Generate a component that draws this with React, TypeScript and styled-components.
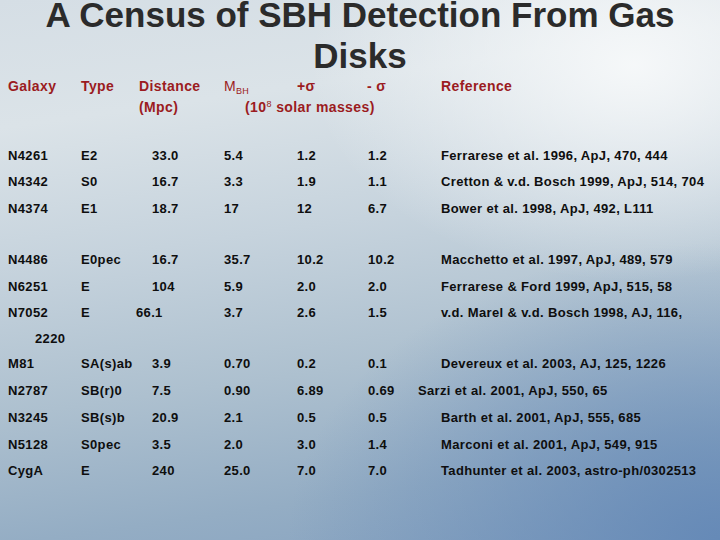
import React from "react";
import styled, { createGlobalStyle } from "styled-components";

const GlobalStyle = createGlobalStyle`
  html, body { margin: 0; padding: 0; }
  body { width: 720px; height: 540px; overflow: hidden; }
  * { box-sizing: border-box; }
`;

const Slide = styled.div`
  position: relative;
  width: 720px;
  height: 540px;
  overflow: hidden;
  padding-top: 1px;
  font-family: "Liberation Sans", Arial, sans-serif;
  background:
    radial-gradient(ellipse 45% 40% at 88% 12%, rgba(247, 249, 250, 0.95) 0%, rgba(247, 249, 250, 0) 100%),
    radial-gradient(ellipse 60% 55% at 100% 100%, rgba(98, 135, 182, 0.9) 0%, rgba(98, 135, 182, 0) 100%),
    linear-gradient(172deg, #d5dee5 0%, #dbe3e8 20%, #c6d3dd 42%, #adc0cf 65%, #94adc4 85%, #86a2c0 100%);
`;

const Title = styled.h1`
  margin: -7px 0 0;
  font-size: 35px;
  line-height: 41px;
  font-weight: 700;
  color: #2b2b2b;
  text-align: center;
`;

const Grid = styled.div<{ $h?: number }>`
  display: grid;
  grid-template-columns: 73px 71px 72px 73px 71px 73px 1fr;
  padding-left: 8px;
  line-height: ${(p) => p.$h ?? 26.8}px;
  white-space: nowrap;
`;

const HeaderBlock = styled.div`
  color: #9b1b21;
  font-size: 14px;
  font-weight: 700;
  letter-spacing: 0.4px;
  margin-bottom: 24.5px;
`;

const HeadRow = styled(Grid)`
  line-height: 21px;
`;

const Cell = styled.div<{ $shift?: number; $span?: number }>`
  margin-left: ${(p) => p.$shift ?? 0}px;
  grid-column: span ${(p) => p.$span ?? 1};
`;

const Sub = styled.sub`
  font-size: 9px;
  font-weight: 400;
  vertical-align: -3px;
  line-height: 0;
  letter-spacing: 0.2px;
`;

const Sup = styled.sup`
  font-size: 9px;
  font-weight: 400;
  vertical-align: 5px;
  line-height: 0;
`;

const Light = styled.span`
  font-weight: 400;
`;

const Body = styled.div`
  color: #0e0e0e;
  font-size: 13px;
  font-weight: 700;
  letter-spacing: 0.35px;
`;

const Spacer = styled.div`
  height: 24px;
`;

type RowData = {
  cells: string[];
  shifts?: Record<number, number>;
};

const upper: RowData[] = [
  { cells: ["N4261", "E2", "33.0", "5.4", "1.2", "1.2", "Ferrarese et al. 1996, ApJ, 470, 444"] },
  { cells: ["N4342", "S0", "16.7", "3.3", "1.9", "1.1", "Cretton & v.d. Bosch 1999, ApJ, 514, 704"] },
  { cells: ["N4374", "E1", "18.7", "17", "12", "6.7", "Bower et al. 1998, ApJ, 492, L111"] },
];

const middle: RowData[] = [
  { cells: ["N4486", "E0pec", "16.7", "35.7", "10.2", "10.2", "Macchetto et al. 1997, ApJ, 489, 579"] },
  { cells: ["N6251", "E", "104", "5.9", "2.0", "2.0", "Ferrarese & Ford 1999, ApJ, 515, 58"] },
  { cells: ["N7052", "E", "66.1", "3.7", "2.6", "1.5", "v.d. Marel & v.d. Bosch 1998, AJ, 116,"], shifts: { 2: -16 } },
];

const lower: RowData[] = [
  { cells: ["M81", "SA(s)ab", "3.9", "0.70", "0.2", "0.1", "Devereux et al. 2003, AJ, 125, 1226"] },
  { cells: ["N2787", "SB(r)0", "7.5", "0.90", "6.89", "0.69", "Sarzi et al. 2001, ApJ, 550, 65"], shifts: { 6: -23 } },
  { cells: ["N3245", "SB(s)b", "20.9", "2.1", "0.5", "0.5", "Barth et al. 2001, ApJ, 555, 685"] },
  { cells: ["N5128", "S0pec", "3.5", "2.0", "3.0", "1.4", "Marconi et al. 2001, ApJ, 549, 915"] },
  { cells: ["CygA", "E", "240", "25.0", "7.0", "7.0", "Tadhunter et al. 2003, astro-ph/0302513"] },
];

const DataRow = ({ row }: { row: RowData }) => (
  <Grid>
    {row.cells.map((c, i) => (
      <Cell key={i} $shift={row.shifts?.[i]}>
        {c}
      </Cell>
    ))}
  </Grid>
);

export default function App() {
  return (
    <>
      <GlobalStyle />
      <Slide>
        <Title>
          A Census of SBH Detection From Gas
          <br />
          Disks
        </Title>
        <HeaderBlock>
          <HeadRow>
            <Cell>Galaxy</Cell>
            <Cell>Type</Cell>
            <Cell $shift={-13}>Distance</Cell>
            <Cell>
              <Light>M</Light>
              <Sub>BH</Sub>
            </Cell>
            <Cell>+σ</Cell>
            <Cell $shift={-1}>- σ</Cell>
            <Cell>Reference</Cell>
          </HeadRow>
          <HeadRow>
            <Cell />
            <Cell />
            <Cell $shift={-13}>(Mpc)</Cell>
            <Cell $span={3} $shift={21}>
              (10<Sup>8</Sup> solar masses)
            </Cell>
          </HeadRow>
        </HeaderBlock>
        <Body>
          {upper.map((r) => (
            <DataRow key={r.cells[0]} row={r} />
          ))}
          <Spacer />
          {middle.map((r) => (
            <DataRow key={r.cells[0]} row={r} />
          ))}
          <Grid $h={24}>
            <Cell $shift={27}>2220</Cell>
          </Grid>
          {lower.map((r) => (
            <DataRow key={r.cells[0]} row={r} />
          ))}
        </Body>
      </Slide>
    </>
  );
}
